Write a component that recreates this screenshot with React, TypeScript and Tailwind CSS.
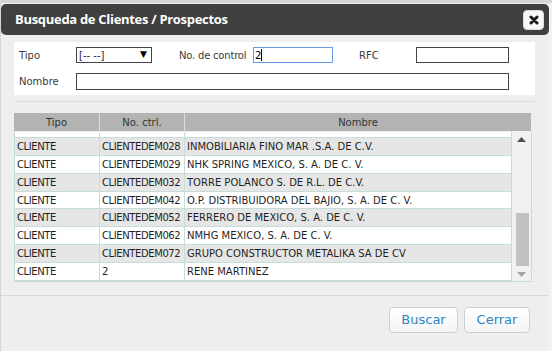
import React from "react";

const rows = [
  ["CLIENTE", "CLIENTEDEM028", "INMOBILIARIA FINO MAR .S.A. DE C.V."],
  ["CLIENTE", "CLIENTEDEM029", "NHK SPRING MEXICO, S. A. DE C. V."],
  ["CLIENTE", "CLIENTEDEM032", "TORRE POLANCO S. DE R.L. DE C.V."],
  ["CLIENTE", "CLIENTEDEM042", "O.P. DISTRIBUIDORA DEL BAJIO, S. A. DE C. V."],
  ["CLIENTE", "CLIENTEDEM052", "FERRERO DE MEXICO, S. A. DE C. V."],
  ["CLIENTE", "CLIENTEDEM062", "NMHG MEXICO, S. A. DE C. V."],
  ["CLIENTE", "CLIENTEDEM072", "GRUPO CONSTRUCTOR METALIKA SA DE CV"],
  ["CLIENTE", "2", "RENE MARTINEZ"],
];

const font = { fontFamily: '"DejaVu Sans", Verdana, sans-serif' };

export default function App() {
  return (
    <div
      className="w-[552px] h-[351px] overflow-hidden bg-[#dedede] flex flex-col text-[#333]"
      style={font}
    >
      <div className="h-[3px] bg-[#d6d6d6] shrink-0" />
      <div className="flex flex-1">
        <div className="w-[549px] bg-[#eeeeee] border-l border-[#d4d4d4] flex flex-col">
          {/* Title bar */}
          <div className="mt-[1px] h-[31px] bg-[#404040] rounded-[5px] flex items-center justify-between pl-[14px] pr-[5px]">
            <span
              className="text-white font-bold text-[13px] tracking-[-0.3px]"
              style={{ fontFamily: '"Open Sans", sans-serif' }}
            >
              Busqueda de Clientes / Prospectos
            </span>
            <div className="w-[21px] h-[20px] bg-[#f7f7f7] rounded-[4px] border border-[#dcdcdc] flex items-center justify-center">
              <svg width="10" height="10" viewBox="0 0 10 10">
                <path d="M2 2 L8 8 M8 2 L2 8" stroke="#1a1a1a" strokeWidth="3" strokeLinecap="round" />
              </svg>
            </div>
          </div>

          {/* Form */}
          <div className="ml-[13px] mt-[7px] w-[521px] h-[53px] bg-white pl-[5px] pt-[5px] text-[10px] text-[#3a3a3a]">
            <div className="flex items-center h-[16px]">
              <span className="w-[57px]">Tipo</span>
              <div className="w-[76px] h-[16px] border border-[#444] flex items-center justify-between pl-[2px] pr-[4px]">
                <span className="text-[#2a1850] text-[10px]">[-- --]</span>
                <span className="text-[9px] text-black">▼</span>
              </div>
              <span className="ml-[27px] w-[74px] whitespace-nowrap tracking-[-0.2px]">No. de control</span>
              <div className="w-[80px] h-[16px] border border-[#6a9be0] flex items-center pl-[1px] text-black">
                2<span className="w-px h-[12px] bg-black" />
              </div>
              <span className="ml-[26px] w-[57px]">RFC</span>
              <div className="w-[93px] h-[16px] border border-[#444]" />
            </div>
            <div className="flex items-center h-[17px] mt-[10px]">
              <span className="w-[57px]">Nombre</span>
              <div className="w-[433px] h-[17px] border border-[#444]" />
            </div>
          </div>
          <div className="ml-[13px] mt-[6px] w-[521px] h-px bg-[#dcdcdc]" />

          {/* Table */}
          <div className="ml-[13px] mt-[11px] w-[518px] text-[10px] text-[#1f1f1f]">
            <div className="flex h-[18px] bg-[#b3b3b3] text-[#333] w-[517px]">
              <div className="w-[86px] border-r border-[#cfe0dd] flex items-center justify-center">Tipo</div>
              <div className="w-[85px] border-r border-[#cfe0dd] flex items-center justify-center">No. ctrl.</div>
              <div className="flex-1 flex items-center justify-center">Nombre</div>
            </div>
            <div className="flex border-l border-b border-r border-[#c5dcd8] h-[151px]">
              <div className="w-[497px] flex flex-col border-r border-[#c5dcd8]">
                <div className="flex h-[6px] bg-white border-b border-[#c5dcd8] mt-[1px]">
                  <div className="w-[85px] border-r border-[#c5dcd8]" />
                  <div className="w-[85px] border-r border-[#c5dcd8]" />
                </div>
                {rows.map((r, i) => (
                  <div
                    key={i}
                    className={`flex h-[18px] border-b border-[#c5dcd8] ${i % 2 === 0 ? "bg-[#e6e6e6]" : "bg-white"}`}
                  >
                    <div className="w-[85px] border-r border-[#c5dcd8] pl-[2px] flex items-center whitespace-nowrap tracking-[-0.4px]">{r[0]}</div>
                    <div className="w-[85px] border-r border-[#c5dcd8] pl-[2px] flex items-center whitespace-nowrap tracking-[-0.4px]">{r[1]}</div>
                    <div className="flex-1 pl-[2px] flex items-center whitespace-nowrap overflow-hidden">{r[2]}</div>
                  </div>
                ))}
              </div>
              <div className="flex-1 bg-[#f1f1f1] flex flex-col items-center pt-[5px] pb-[4px]">
                <svg width="9" height="5" viewBox="0 0 9 5" className="mt-[1px]">
                  <path d="M0 5 L4.5 0 L9 5 Z" fill="#505050" />
                </svg>
                <div className="flex-1" />
                <div className="w-[13px] h-[53px] bg-[#c1c1c1] ml-[1px]" />
                <svg width="9" height="5" viewBox="0 0 9 5" className="mt-[6px]">
                  <path d="M0 0 L9 0 L4.5 5 Z" fill="#a3a3a3" />
                </svg>
              </div>
            </div>
          </div>

          <div className="mt-[13px] h-px bg-[#d9d9d9]" />
          <div className="flex justify-end gap-[6px] pr-[19px] mt-[11px]">
            <button className="w-[69px] h-[26px] rounded-[4px] border border-[#cfcfcf] bg-gradient-to-b from-white to-[#f4f4f4] text-[#2f86c1] text-[13px]">
              Buscar
            </button>
            <button className="w-[66px] h-[26px] rounded-[4px] border border-[#cfcfcf] bg-gradient-to-b from-white to-[#f4f4f4] text-[#2f86c1] text-[13px]">
              Cerrar
            </button>
          </div>
        </div>
        <div className="flex-1 bg-[#f2f2f2]" />
      </div>
    </div>
  );
}
